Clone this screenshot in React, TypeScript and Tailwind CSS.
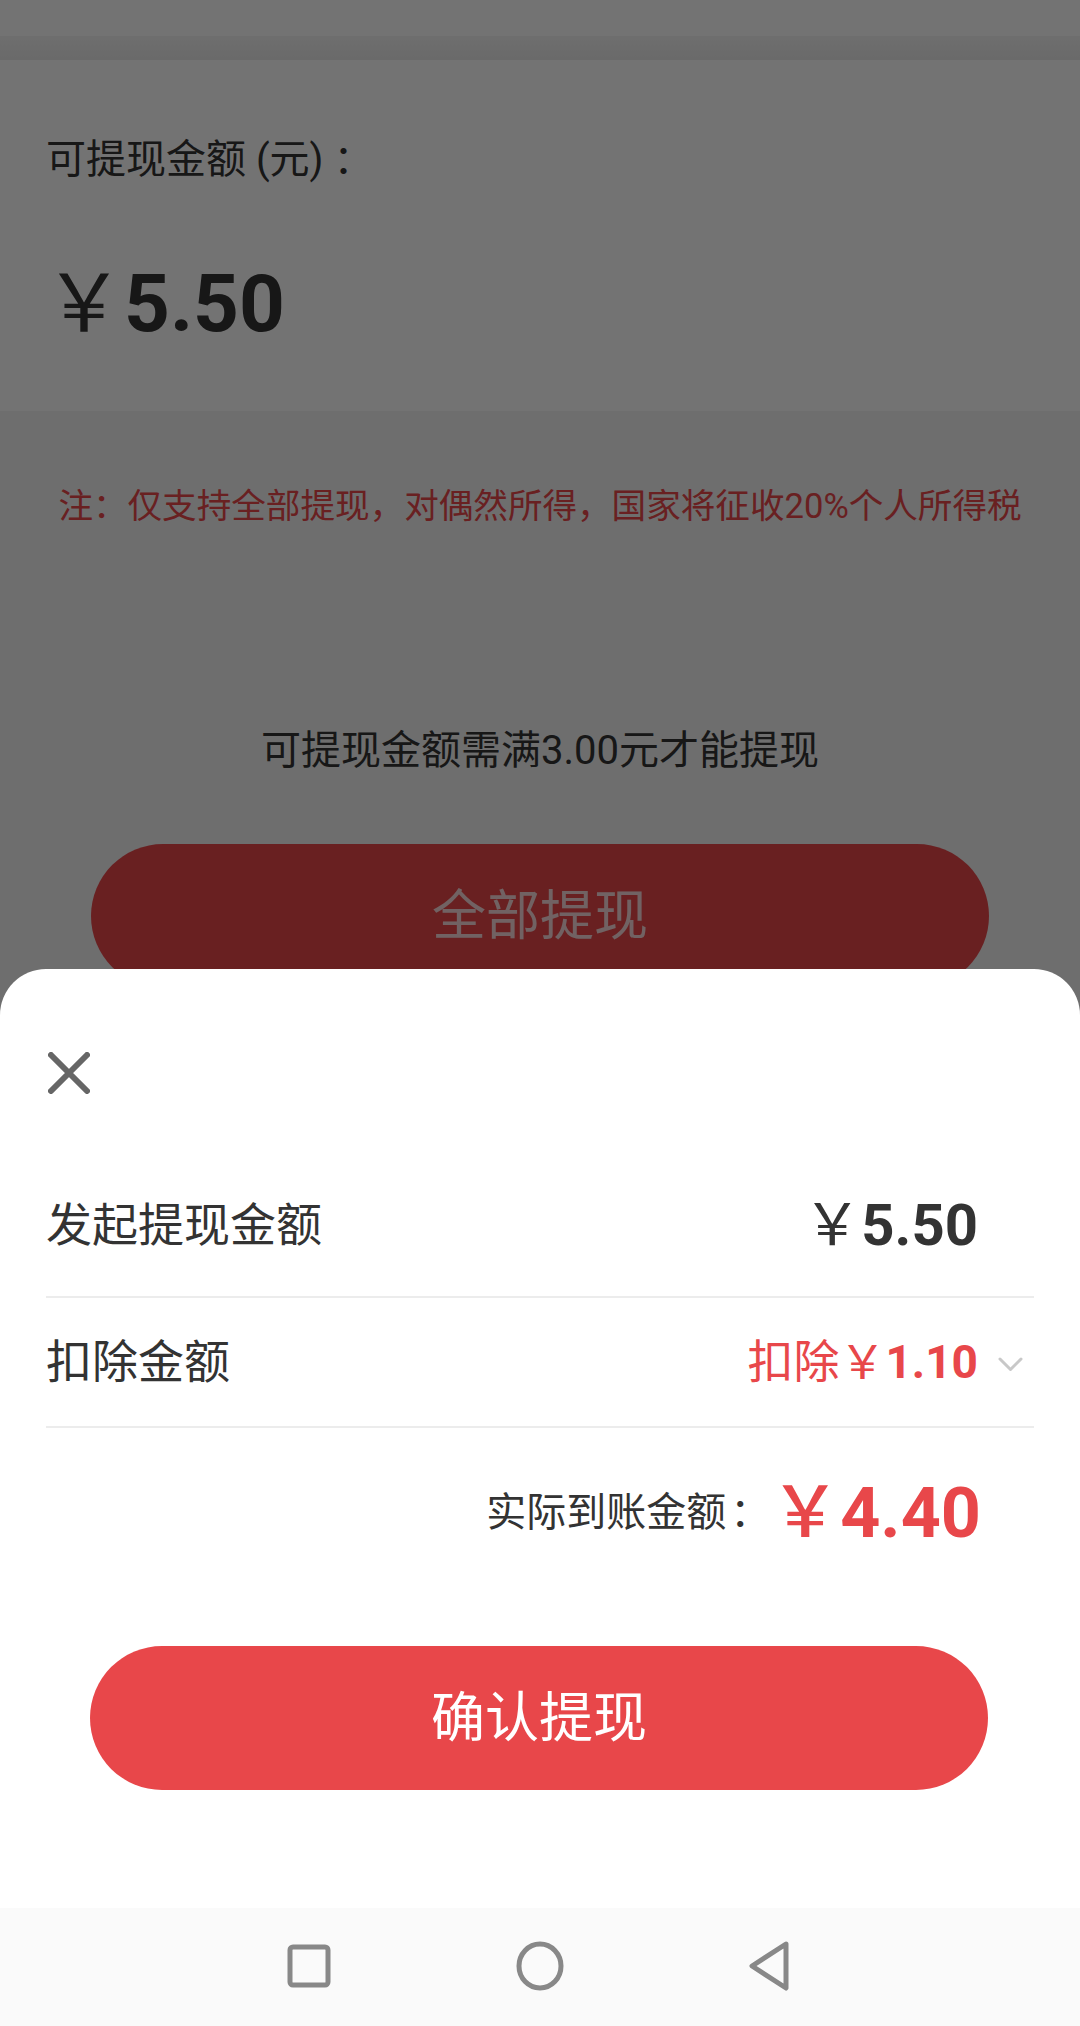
import { useState } from "react";

const FONT = "font-['Roboto','Noto_Sans_CJK_SC',sans-serif]";

const CloseIcon = () => (
  <svg width="42" height="42" viewBox="0 0 42 42" fill="none">
    <path d="M3 3L39 39M39 3L3 39" stroke="#666666" strokeWidth="6" strokeLinecap="round" />
  </svg>
);

const Chevron = () => (
  <svg width="25" height="15" viewBox="0 0 25 15" fill="none">
    <path d="M2 2L12.5 12.5L23 2" stroke="#c8c8c8" strokeWidth="3" strokeLinecap="round" strokeLinejoin="round" />
  </svg>
);

const NavBar = () => (
  <div className="h-[118px] bg-[#fafafa] flex items-center pb-[2px]">
    <div className="w-[309px] flex justify-end">
      <svg width="44" height="44" viewBox="0 0 44 44" fill="none" className="mr-[-22px]">
        <rect x="3" y="3" width="38" height="38" rx="3" stroke="#888888" strokeWidth="5" />
      </svg>
    </div>
    <div className="w-[231px] flex justify-end">
      <svg width="50" height="50" viewBox="0 0 50 50" fill="none" className="mr-[-25px]">
        <ellipse cx="25" cy="25" rx="21" ry="22" stroke="#888888" strokeWidth="5" />
      </svg>
    </div>
    <div className="w-[229px] flex justify-end">
      <svg width="44" height="50" viewBox="0 0 44 50" fill="none" className="mr-[-22px]">
        <path d="M39 3L5 25L39 47Z" stroke="#888888" strokeWidth="5" strokeLinejoin="round" />
      </svg>
    </div>
  </div>
);

const PageView = () => (
  <div className="bg-[#f3f3f3] h-full">
    {/* status bar + header edge */}
    <div className="h-[36px] bg-white" />
    <div className="h-[24px] bg-gradient-to-b from-[#f4f4f4] to-[#ebebeb]" />
    {/* balance card */}
    <section className="h-[351px] bg-white px-[46px] pt-[76px]">
      <p className="text-[40px] leading-[48px] text-[#333333]">
        可提现金额 (元)<span className="ml-[10px]">：</span>
      </p>
      <p className="mt-[78px] ml-[-2px] text-[80px] leading-[84px] font-bold text-[#333333]">
        <span className="font-normal">￥</span>5.50
      </p>
    </section>
    <p className="mt-[75px] text-center text-[34.6px] leading-[40px] text-[#e8474a]">
      注：仅支持全部提现，对偶然所得，国家将征收20%个人所得税
    </p>
    <p className="mt-[201px] text-center text-[40px] leading-[48px] text-[#333333]">
      可提现金额需满3.00元才能提现
    </p>
    <button className="mt-[69px] mx-auto flex w-[898px] h-[144px] rounded-full bg-[#e8474a] items-center justify-center text-[54px] text-white/80">
      全部提现
    </button>
  </div>
);

const SheetView = ({ onClose }: { onClose: () => void }) => (
  <div className="absolute left-0 right-0 bottom-0">
    <div className="h-[939px] bg-white rounded-t-[46px] px-[46px] pt-[83px]">
      <button onClick={onClose} className="ml-[2px] block">
        <CloseIcon />
      </button>
      {/* rows */}
      <div className="mt-[60px] h-[144px] flex items-center border-b-2 border-[#ececec] text-[#333333]">
        <span className="flex-1 text-[46px]">发起提现金额</span>
        <span className="text-[58px] font-bold leading-none">
          <span className="font-normal">￥</span>5.50
        </span>
        <span className="w-[56px]" />
      </div>
      <div className="h-[130px] flex items-center border-b-2 border-[#ececec]">
        <span className="flex-1 text-[46px] text-[#333333]">扣除金额</span>
        <span className="text-[46px] leading-none text-[#e8474a]">
          扣除￥<span className="font-bold">1.10</span>
        </span>
        <span className="w-[56px] flex pl-[20px] pt-[4px]">
          <Chevron />
        </span>
      </div>
      <div className="h-[170px] flex items-center justify-end">
        <span className="text-[40px] text-[#333333]">
          实际到账金额<span className="ml-[4px]">：</span>
        </span>
        <span className="text-[70px] font-bold leading-none text-[#e8474a]">
          <span className="font-medium">￥</span>4.40
        </span>
        <span className="w-[53px]" />
      </div>
      <button className="mt-[48px] ml-[44px] flex w-[898px] h-[144px] rounded-full bg-[#e8474a] items-center justify-center text-[54px] text-white">
        确认提现
      </button>
    </div>
    <NavBar />
  </div>
);

export default function App() {
  const [open, setOpen] = useState(true);
  return (
    <div className={`relative w-[1080px] h-[2026px] overflow-hidden ${FONT}`}>
      <PageView />
      {open && (
        <>
          <div className="absolute inset-0 bg-black/55" />
          <SheetView onClose={() => setOpen(false)} />
        </>
      )}
    </div>
  );
}
